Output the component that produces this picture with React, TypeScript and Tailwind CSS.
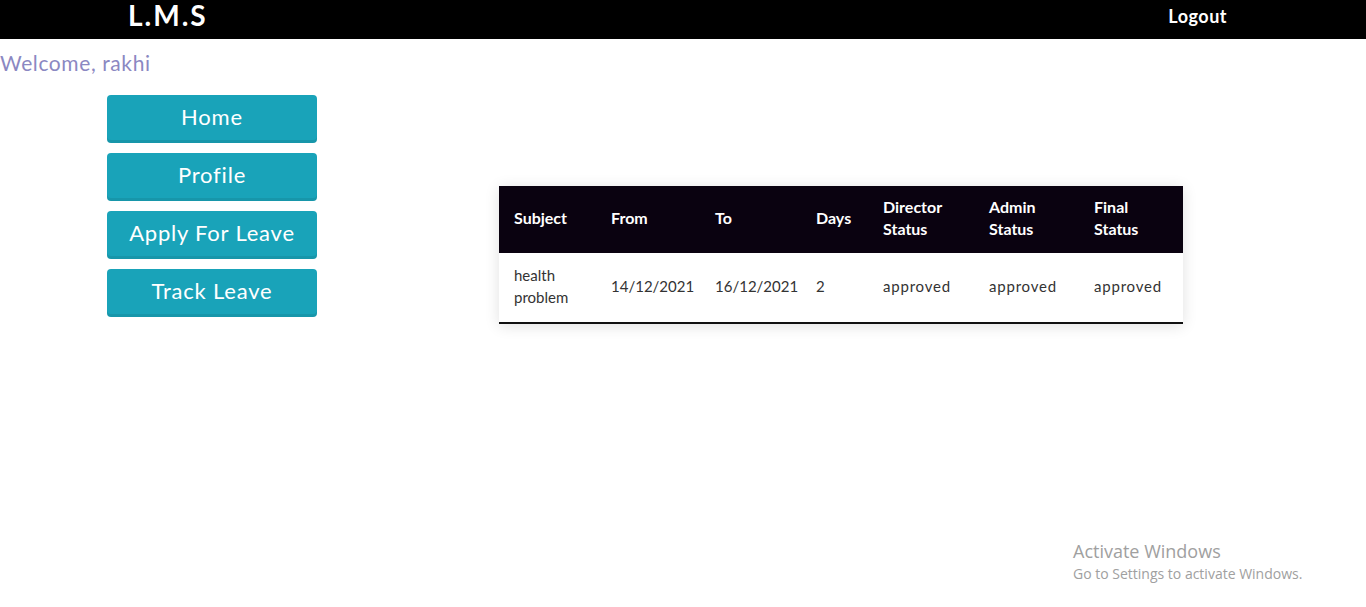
const rows = [
  {
    subject: "health problem",
    from: "14/12/2021",
    to: "16/12/2021",
    days: "2",
    director: "approved",
    admin: "approved",
    final: "approved",
  },
];

const menu = ["Home", "Profile", "Apply For Leave", "Track Leave"];

export default function App() {
  return (
    <div className="relative min-h-[607px] bg-white font-['Lato',sans-serif]">
      {/* ===== Nav ===== */}
      <nav className="flex h-[39px] items-start justify-between bg-black pl-[128px] pr-[139px]">
        <span className="pt-[2px] text-[28px] font-bold leading-[26px] tracking-[2px] text-white">L.M.S</span>
        <span className="pt-[4px] text-[18px] font-bold leading-[24px] tracking-[0.5px] text-white">Logout</span>
      </nav>

      <div className="pt-[11px] text-[21px] leading-[26px] tracking-[0.6px] text-[#8b88c2]">Welcome, rakhi</div>

      <div className="mt-[13px] flex">
        {/* ===== Side menu ===== */}
        <div className="ml-[107px] mt-[6px] flex w-[210px] flex-col gap-[10px]">
          {menu.map((m) => (
            <button
              key={m}
              className="h-[48px] rounded-[4px] bg-[#19a3b9] pb-[5px] text-[22px] tracking-[0.8px] text-white shadow-[inset_0_-3px_0_rgba(0,0,0,0.08)]"
            >
              {m}
            </button>
          ))}
        </div>

        {/* ===== Leave table ===== */}
        <div className="ml-[182px] mt-[97px] w-[684px] self-start shadow-[0_2px_14px_rgba(0,0,0,0.12)]">
          <table className="w-full table-fixed border-collapse text-left">
            <colgroup>
              <col className="w-[97px]" />
              <col className="w-[104px]" />
              <col className="w-[101px]" />
              <col className="w-[67px]" />
              <col className="w-[106px]" />
              <col className="w-[105px]" />
              <col />
            </colgroup>
            <thead>
              <tr className="h-[67px] bg-[#0a0210] text-[16px] font-bold leading-[22px] text-white">
                <th className="pb-[4px] pl-[15px]">Subject</th>
                <th className="pb-[4px] pl-[15px]">From</th>
                <th className="pb-[4px] pl-[15px]">To</th>
                <th className="pb-[4px] pl-[15px]">Days</th>
                <th className="pb-[4px] pl-[15px]">Director<br />Status</th>
                <th className="pb-[4px] pl-[15px]">Admin<br />Status</th>
                <th className="pb-[4px] pl-[15px]">Final<br />Status</th>
              </tr>
            </thead>
            <tbody>
              {rows.map((r, i) => (
                <tr key={i} className="h-[70px] border-b-2 border-[#111] text-[15px] leading-[22px] text-[#333]">
                  <td className="pb-[4px] pl-[15px] pr-[10px]">{r.subject}</td>
                  <td className="pb-[4px] pl-[15px]">{r.from}</td>
                  <td className="pb-[4px] pl-[15px]">{r.to}</td>
                  <td className="pb-[4px] pl-[15px]">{r.days}</td>
                  <td className="pb-[4px] pl-[15px] tracking-[0.8px]">{r.director}</td>
                  <td className="pb-[4px] pl-[15px] tracking-[0.8px]">{r.admin}</td>
                  <td className="pb-[4px] pl-[15px] tracking-[0.8px]">{r.final}</td>
                </tr>
              ))}
            </tbody>
          </table>
        </div>
      </div>

      {/* ===== Watermark overlay ===== */}
      <div className="absolute left-[1073px] top-[539px] font-['Open_Sans',sans-serif] text-[#a0a0a0]">
        <div className="text-[18px] leading-[24px]">Activate Windows</div>
        <div className="text-[14px] leading-[22px]">Go to Settings to activate Windows.</div>
      </div>
    </div>
  );
}
